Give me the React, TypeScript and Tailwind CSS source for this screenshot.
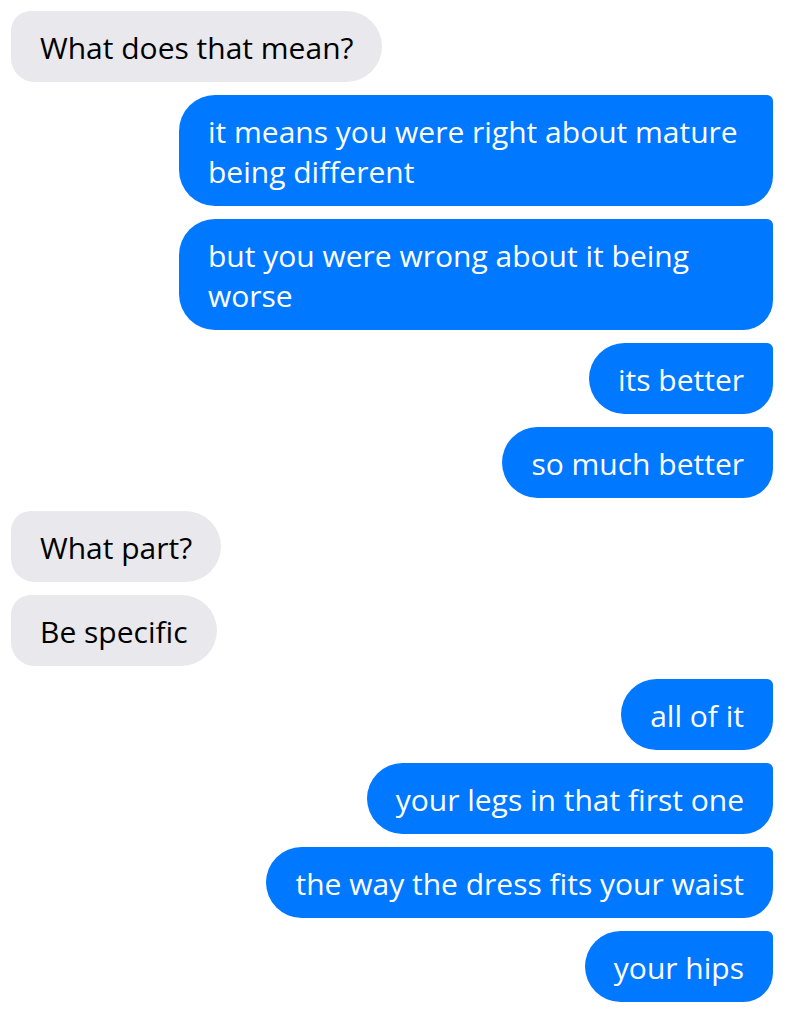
const messages: { from: 'them' | 'me'; lines: string[] }[] = [
  { from: 'them', lines: ['What does that mean?'] },
  { from: 'me', lines: ['it means you were right about mature', 'being different'] },
  { from: 'me', lines: ['but you were wrong about it being', 'worse'] },
  { from: 'me', lines: ['its better'] },
  { from: 'me', lines: ['so much better'] },
  { from: 'them', lines: ['What part?'] },
  { from: 'them', lines: ['Be specific'] },
  { from: 'me', lines: ['all of it'] },
  { from: 'me', lines: ['your legs in that first one'] },
  { from: 'me', lines: ['the way the dress fits your waist'] },
  { from: 'me', lines: ['your hips'] },
]

export default function App() {
  return (
    <main
      className="min-h-screen bg-white pt-[11px] pl-[11px] pr-[23px] flex flex-col gap-[13px]"
      style={{ fontFamily: '"Open Sans", "Noto Sans", sans-serif' }}
    >
      {messages.map((m, i) => (
        <Bubble key={i} from={m.from} lines={m.lines} />
      ))}
    </main>
  )
}

function Bubble({ from, lines }: { from: 'them' | 'me'; lines: string[] }) {
  const mine = from === 'me'
  const wide = lines.length > 1
  return (
    <div className={`flex ${mine ? 'justify-end' : 'justify-start'}`}>
      <div
        className={`px-[29px] pt-[17px] pb-[14px] text-[30px] leading-[40px] whitespace-nowrap ${
          mine
            ? 'bg-[#0078ff] text-white rounded-l-[36px] rounded-tr-[6px] rounded-br-[30px]'
            : 'bg-[#e9e8ed] text-black rounded-r-[36px] rounded-tl-[20px] rounded-bl-[24px]'
        } ${wide ? 'w-[594px]' : ''}`}
      >
        {lines.map((l, j) => (
          <div key={j}>{l}</div>
        ))}
      </div>
    </div>
  )
}
